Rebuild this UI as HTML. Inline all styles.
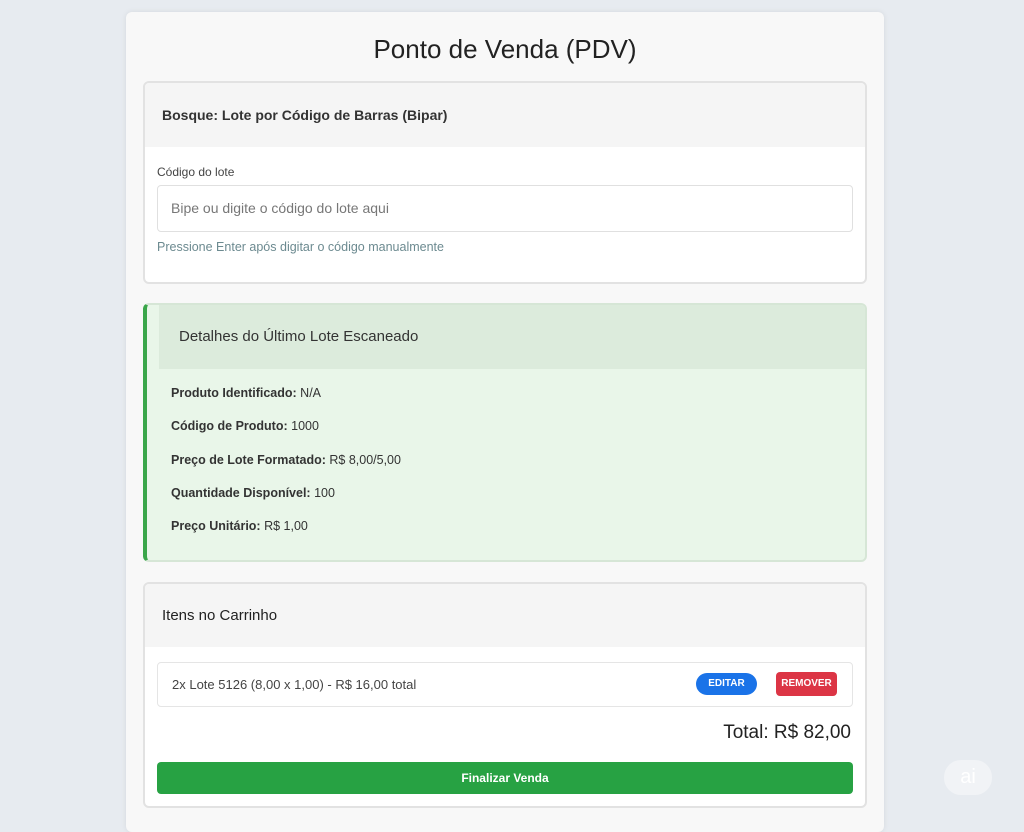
<!DOCTYPE html>
<html><head><meta charset="utf-8"><style>
*{box-sizing:border-box;margin:0;padding:0}
body{width:1024px;height:827px;background:#e7ebf0;font-family:"Liberation Sans",sans-serif;color:#222;position:relative;overflow:hidden}
.wrap{position:absolute;left:126px;top:12px;width:758px;height:820px;background:#f8f8f8;border-radius:6px;box-shadow:0 0 6px rgba(0,0,0,.08)}
h1{position:absolute;top:22px;width:100%;text-align:center;font-weight:normal;font-size:26px;color:#222}
.card{position:absolute;left:17px;width:724px;background:#fff;border:2px solid #e2e2e2;border-radius:6px;overflow:hidden}
.hd{background:#f5f5f5;font-size:15px;padding-left:17px}
.abs{position:absolute}
.btn{position:absolute;height:22px;border-radius:11px;color:#fff;font-size:10px;font-weight:bold;text-align:center;line-height:22px}
</style></head><body>
<div class="wrap">
<h1>Ponto de Venda (PDV)</h1>
<div class="card" style="top:69px;height:203px">
 <div class="hd" style="height:64px;line-height:64px;font-weight:bold;font-size:14px;color:#333">Bosque: Lote por Código de Barras (Bipar)</div>
 <div class="abs" style="left:12px;top:82px;font-size:12px;color:#444">Código do lote</div>
 <div class="abs" style="left:12px;top:102px;width:696px;height:47px;border:1px solid #e0e0e0;border-radius:4px;font-size:14px;color:#777;line-height:45px;padding-left:13px">Bipe ou digite o código do lote aqui</div>
 <div class="abs" style="left:12px;top:157px;font-size:12.5px;color:#6c8a90">Pressione Enter após digitar o código manualmente</div>
</div>
<div class="card" style="top:291px;height:259px;background:#e9f6e9;border-color:#d6e6d6;border-left:4px solid #3aa64a">
 <div class="abs" style="left:12px;top:0;width:710px;height:64px;background:#dcebdc;line-height:64px;font-size:15px;padding-left:20px;color:#333">Detalhes do Último Lote Escaneado</div>
 <div class="abs" style="left:24px;top:72px;font-size:12.5px;line-height:33.3px;color:#333"><b>Produto Identificado:</b> N/A<br><b>Código de Produto:</b> 1000<br><b>Preço de Lote Formatado:</b> R$ 8,00/5,00<br><b>Quantidade Disponível:</b> 100<br><b>Preço Unitário:</b> R$ 1,00</div>
</div>
<div class="card" style="top:570px;height:226px">
 <div class="hd" style="height:63px;line-height:63px">Itens no Carrinho</div>
 <div class="abs" style="left:12px;top:78px;width:696px;height:45px;border:1px solid #e5e5e5;border-radius:4px;font-size:13px;color:#444;line-height:43px;padding-left:14px">2x Lote 5126 (8,00 x 1,00) - R$ 16,00 total
  <div class="btn" style="left:538px;top:10px;width:61px;background:#1a73e8">EDITAR</div>
  <div class="btn" style="left:618px;top:9px;width:61px;height:24px;line-height:24px;border-radius:4px;background:#dc3545">REMOVER</div>
 </div>
 <div class="abs" style="right:14px;top:138px;font-size:19px;color:#222">Total: R$ 82,00</div>
 <div class="abs" style="left:12px;top:178px;width:696px;height:32px;background:#27a243;border-radius:4px;color:#fff;font-size:12px;font-weight:bold;text-align:center;line-height:32px">Finalizar Venda</div>
</div>
</div>
<div class="abs" style="left:944px;top:760px;width:48px;height:35px;border-radius:17px;background:#f1f3f6;color:#fff;font-size:20px;text-align:center;line-height:35px">ai</div>
</body></html>
